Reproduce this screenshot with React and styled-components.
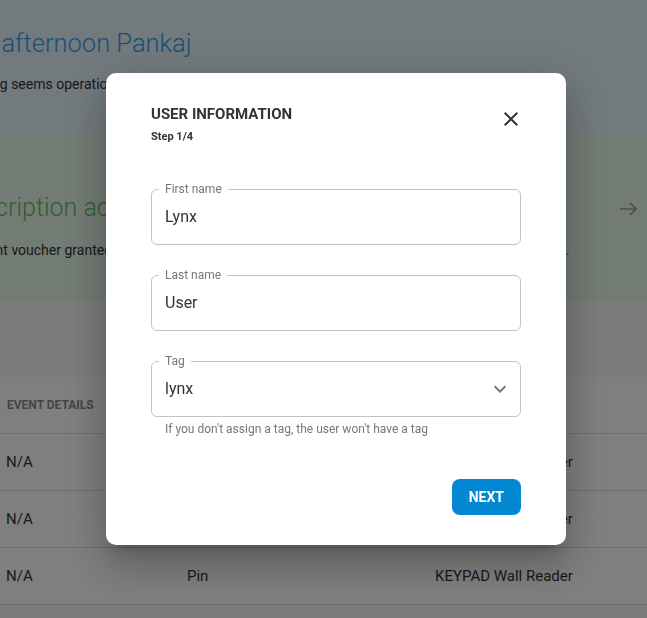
import React from "react";
import styled, { createGlobalStyle, css } from "styled-components";

const GlobalStyle = createGlobalStyle`
  html, body {
    margin: 0;
    padding: 0;
    height: 100%;
    overflow: hidden;
    background: #f8f8f8;
    font-family: Roboto, "Noto Sans", "Liberation Sans", sans-serif;
    color: #333;
  }
  * { box-sizing: border-box; }
`;

const clipped = css`
  margin-left: ${(p) => p.$shift || 0}px;
  white-space: nowrap;
`;

const Page = styled.div`
  width: 100%;
  overflow: hidden;
`;

const Hero = styled.section`
  height: 138px;
  background: #e6f4fc;
  padding-top: 26px;
  overflow: hidden;
`;

const Greeting = styled.h1`
  ${clipped};
  margin-top: 0;
  margin-bottom: 0;
  font-size: 25.5px;
  line-height: 34px;
  font-weight: 300;
  color: #3b9fe6;
`;

const Status = styled.p`
  ${clipped};
  margin-top: 14px;
  margin-bottom: 0;
  font-size: 14px;
  line-height: 20px;
  color: #333;
`;

const Banner = styled.section`
  height: 162px;
  background: #e6f8e8;
  display: flex;
  align-items: flex-start;
  justify-content: space-between;
  padding: 55px 9px 0 0;
  overflow: hidden;
`;

const BannerText = styled.div`
  display: flex;
  flex-direction: column;
  gap: 17px;
  min-width: 0;
`;

const BannerTitle = styled.h2`
  ${clipped};
  margin-top: 0;
  margin-bottom: 0;
  font-size: 25px;
  line-height: 30px;
  font-weight: 300;
  color: #66bb66;
`;

const BannerBody = styled.p`
  ${clipped};
  margin-top: 0;
  margin-bottom: 0;
  font-size: 14px;
  line-height: 20px;
  color: #333;
`;

const ArrowBox = styled.span`
  display: flex;
  flex-shrink: 0;
  margin-top: 6px;
  color: #9a9a9a;
`;

const Table = styled.div`
  margin-top: 77px;
  background: #fff;
`;

const Row = styled.div`
  display: grid;
  grid-template-columns: 181px 248px 1fr;
  height: 57px;
  align-items: center;
  border-bottom: 1px solid #dcdcdc;
`;

const Cell = styled.div`
  padding-left: 6px;
  font-size: 15px;
  color: #333;
  white-space: nowrap;
`;

const HeadCell = styled(Cell)`
  padding-left: 7px;
  font-size: 12px;
  font-weight: 700;
  text-transform: uppercase;
  color: #8a8a8a;
`;

const Backdrop = styled.div`
  position: fixed;
  inset: 0;
  background: rgba(0, 0, 0, 0.5);
  display: flex;
  align-items: center;
  justify-content: center;
  padding-left: 25px;
`;

const Dialog = styled.div`
  width: 460px;
  background: #fff;
  border-radius: 10px;
  padding: 32px 45px 30px;
  box-shadow: 0 11px 15px -7px rgba(0, 0, 0, 0.2),
    0 24px 38px 3px rgba(0, 0, 0, 0.14), 0 9px 46px 8px rgba(0, 0, 0, 0.12);
  display: flex;
  flex-direction: column;
`;

const DialogHeader = styled.div`
  display: flex;
  justify-content: space-between;
  align-items: flex-start;
`;

const Title = styled.h3`
  margin: 0;
  font-size: 15px;
  line-height: 18px;
  font-weight: 700;
  color: #333;
`;

const Step = styled.div`
  margin-top: 7px;
  font-size: 11px;
  line-height: 14px;
  font-weight: 700;
  color: #333;
`;

const CloseButton = styled.button`
  border: 0;
  background: none;
  padding: 0;
  margin: 2px -2px 0 0;
  width: 24px;
  height: 24px;
  display: flex;
  color: #333;
  cursor: pointer;
`;

const Form = styled.div`
  margin-top: 38px;
  display: flex;
  flex-direction: column;
  gap: 23px;
`;

const Field = styled.fieldset`
  margin: 0;
  padding: 0 8px 0 7px;
  border: 1px solid #c4c4c4;
  border-radius: 6px;
  min-width: 0;
`;

const Legend = styled.legend`
  padding: 0 6px;
  font-size: 12px;
  line-height: 14px;
  color: #777;
`;

const FieldRow = styled.div`
  display: flex;
  align-items: center;
  height: 48px;
  padding: 0 0 7px 6px;
`;

const Input = styled.input`
  flex: 1;
  min-width: 0;
  border: 0;
  outline: none;
  padding: 0;
  background: transparent;
  font-family: inherit;
  font-size: 16px;
  color: #333;
`;

const ChevronBox = styled.span`
  display: flex;
  color: #777;
`;

const Helper = styled.div`
  margin: 5px 0 0 14px;
  font-size: 12px;
  line-height: 14px;
  color: #777;
`;

const Footer = styled.div`
  margin-top: 43px;
  display: flex;
  justify-content: flex-end;
`;

const NextButton = styled.button`
  height: 36px;
  padding: 0 17px;
  border: 0;
  border-radius: 8px;
  background: #0288d1;
  color: #fff;
  font-family: inherit;
  font-size: 14px;
  font-weight: 700;
  text-transform: uppercase;
  cursor: pointer;
`;

const CloseIcon = () => (
  <svg width="24" height="24" viewBox="0 0 24 24" fill="currentColor">
    <path d="M19 6.41 17.59 5 12 10.59 6.41 5 5 6.41 10.59 12 5 17.59 6.41 19 12 13.41 17.59 19 19 17.59 13.41 12z" />
  </svg>
);

const ChevronIcon = () => (
  <svg width="24" height="24" viewBox="0 0 24 24" fill="currentColor">
    <path d="M16.59 8.59 12 13.17 7.41 8.59 6 10l6 6 6-6z" />
  </svg>
);

const ArrowIcon = () => (
  <svg width="20" height="20" viewBox="0 0 20 20" fill="none" stroke="currentColor" strokeWidth="1.6">
    <path d="M2 10h16M12 4l6 6-6 6" />
  </svg>
);

const rows = [
  ["N/A", "Pin", "KEYPAD Wall Reader"],
  ["N/A", "Pin", "KEYPAD Wall Reader"],
  ["N/A", "Pin", "KEYPAD Wall Reader"],
];

export default function App() {
  return (
    <>
      <GlobalStyle />
      <Page>
        <Hero>
          <Greeting $shift={-65}>Good afternoon Pankaj</Greeting>
          <Status $shift={-57}>Everything seems operational</Status>
        </Hero>
        <Banner>
          <BannerText>
            <BannerTitle $shift={-60}>Subscription active</BannerTitle>
            <BannerBody $shift={-38}>
              Current voucher granted, all features of your plan are available until the next planned renewal date.
            </BannerBody>
          </BannerText>
          <ArrowBox>
            <ArrowIcon />
          </ArrowBox>
        </Banner>
        <Table>
          <Row>
            <HeadCell>Event details</HeadCell>
            <HeadCell>Method</HeadCell>
            <HeadCell>Device</HeadCell>
          </Row>
          {rows.map((r, i) => (
            <Row key={i}>
              {r.map((c, j) => (
                <Cell key={j}>{c}</Cell>
              ))}
            </Row>
          ))}
        </Table>
      </Page>
      <Backdrop>
        <Dialog>
          <DialogHeader>
            <div>
              <Title>USER INFORMATION</Title>
              <Step>Step 1/4</Step>
            </div>
            <CloseButton aria-label="Close">
              <CloseIcon />
            </CloseButton>
          </DialogHeader>
          <Form>
            <Field>
              <Legend>First name</Legend>
              <FieldRow>
                <Input defaultValue="Lynx" />
              </FieldRow>
            </Field>
            <Field>
              <Legend>Last name</Legend>
              <FieldRow>
                <Input defaultValue="User" />
              </FieldRow>
            </Field>
            <div>
              <Field>
                <Legend>Tag</Legend>
                <FieldRow>
                  <Input defaultValue="lynx" readOnly />
                  <ChevronBox>
                    <ChevronIcon />
                  </ChevronBox>
                </FieldRow>
              </Field>
              <Helper>If you don't assign a tag, the user won't have a tag</Helper>
            </div>
          </Form>
          <Footer>
            <NextButton>Next</NextButton>
          </Footer>
        </Dialog>
      </Backdrop>
    </>
  );
}
